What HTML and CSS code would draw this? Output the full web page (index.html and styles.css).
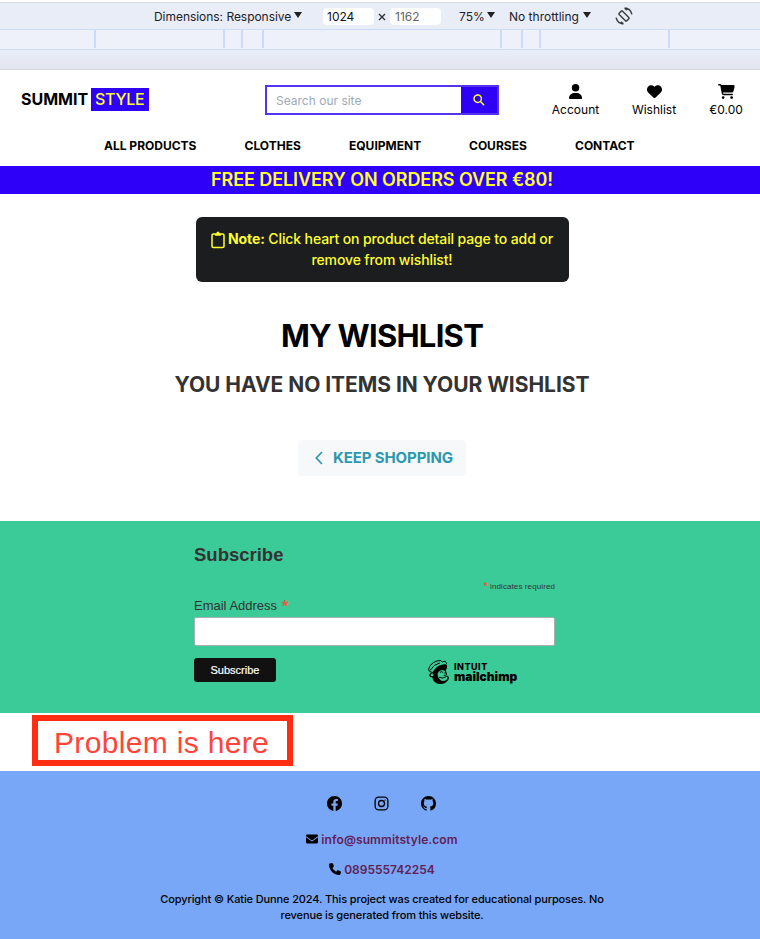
FILE: index.html
```html
<!DOCTYPE html>
<html lang="en">
<head>
<meta charset="utf-8">
<title>Summit Style - Wishlist</title>
<link rel="stylesheet" href="styles.css">
</head>
<body>
<div class="device">
  <div class="toolbar">
    <span class="t-dim">Dimensions: Responsive</span><i class="caret"></i>
    <span class="field field-w">1024</span>
    <svg class="times" viewBox="0 0 8 8"><path d="M1 1l6 6M7 1L1 7"/></svg>
    <span class="field field-h">1162</span>
    <span class="t-zoom">75%</span><i class="caret"></i>
    <span class="t-throttle">No throttling</span><i class="caret"></i>
    <svg class="rotate" viewBox="0 0 18 18"><rect x="6.6" y="3.6" width="4.8" height="10.8" rx="1" transform="rotate(-45 9 9)"/><path d="M9.6 1.1Q15.3 1.3 16.9 7.4M9.6 1.1l2.5 2.2M8.4 16.9Q2.7 16.7 1.1 10.6M8.4 16.9l-2.5-2.2"/></svg>
  </div>
  <div class="ruler"><i></i><i></i><i></i><i></i><i></i><i></i><i></i><i></i></div>
  <div class="gutter"></div>
</div>
<header>
  <div class="top">
    <a class="logo"><span class="logo-a">SUMMIT</span><span class="logo-b">STYLE</span></a>
    <div class="search"><span class="placeholder">Search our site</span><span class="search-btn"><svg viewBox="0 0 14 14"><circle cx="5.5" cy="5.5" r="4.3"/><path d="M8.7 8.7L13 13"/></svg></span></div>
    <div class="links">
      <a class="account"><svg viewBox="0 0 448 512"><path d="M224 256A128 128 0 1 0 224 0a128 128 0 1 0 0 256zm-45.700 48C79.800 304 0 383.800 0 482.300C0 498.700 13.300 512 29.700 512H418.300c16.400 0 29.700-13.300 29.700-29.700C448 383.800 368.200 304 269.700 304H178.300z"/></svg><span>Account</span></a>
      <a class="wish"><svg viewBox="0 0 512 512"><path d="M47.600 300.400L228.300 469.100c7.500 7 17.400 10.900 27.700 10.900s20.200-3.900 27.700-10.900L464.400 300.400c30.400-28.300 47.600-68 47.600-109.500v-5.800c0-69.900-50.500-129.500-119.400-141C347 36.500 300.600 51.400 268 84L256 96 244 84c-32.600-32.600-79-47.500-124.600-39.900C50.500 55.600 0 115.200 0 185.100v5.800c0 41.500 17.200 81.200 47.600 109.500z"/></svg><span>Wishlist</span></a>
      <a class="cart"><svg viewBox="0 0 576 512"><path d="M0 24C0 10.700 10.700 0 24 0H69.500c22 0 41.500 12.800 50.600 32h411c26.300 0 45.500 25 38.600 50.400l-41 152.300c-8.500 31.400-37 53.300-69.500 53.300H170.700l5.400 28.500c2.200 11.300 12.100 19.500 23.600 19.500H488c13.300 0 24 10.700 24 24s-10.700 24-24 24H199.700c-34.600 0-64.300-24.600-70.700-58.500L77.400 54.500c-.7-3.800-4-6.500-7.900-6.500H24C10.700 48 0 37.300 0 24zM128 464a48 48 0 1 1 96 0 48 48 0 1 1-96 0zm336-48a48 48 0 1 1 0 96 48 48 0 1 1 0-96z"/></svg><span>€0.00</span></a>
    </div>
  </div>
  <nav><a>ALL PRODUCTS</a><a>CLOTHES</a><a>EQUIPMENT</a><a>COURSES</a><a>CONTACT</a></nav>
</header>
<div class="banner"><span>FREE DELIVERY ON ORDERS OVER €80!</span></div>
<main>
  <div class="note"><svg viewBox="0 0 14 18"><path d="M4 3H2.300Q1 3 1 4.300V15.300Q1 16.600 2.300 16.600H11.700Q13 16.600 13 15.300V4.300Q13 3 11.700 3H10"/><path class="clip" d="M3.800 2.200H5.400Q5.700.6 7 .6T8.600 2.200H10.200V3.700Q10.200 4.700 9.200 4.700H4.800Q3.800 4.700 3.800 3.700z"/></svg><b>Note:</b> <span class="l1">Click heart on product detail page to add or</span><br><span class="l2">remove from wishlist!</span></div>
  <h1>MY WISHLIST</h1>
  <h2>YOU HAVE NO ITEMS IN YOUR WISHLIST</h2>
  <a class="keep"><svg viewBox="0 0 8 14"><path d="M7 1L1.300 7L7 13"/></svg><span>KEEP SHOPPING</span></a>
</main>
<section class="subscribe">
  <div class="form">
    <h3>Subscribe</h3>
    <p class="required"><em>*</em> indicates required</p>
    <label>Email Address <em>*</em></label>
    <div class="input"></div>
    <div class="actions">
      <button>Subscribe</button>
      <div class="mc">
        <svg viewBox="0 0 24 26"><path class="fill" d="M5 13Q6 11 8 9Q12 5 18 4.500Q21 4 20.300 8L19 11Q20.500 14 20.300 16Q23 17 22 20Q19 25.500 12 25Q6 24 5 18Q1.500 18 2 15Q2.500 13 5 13z"/><path class="line" d="M5 13Q.5 12 1.200 9.500Q3 3 10 1Q14-.5 15.500 2Q19 0 20 4M2.500 11Q7 4 13 3"/><path class="face" d="M12 12Q15 9 18 11.500L19 15Q22 17 20 20.500Q16 23 13 20.500Q10 17 10.500 14z"/><path class="line" d="M13 13q2-2 3 0M17.500 13v1M12 18Q16 20 20 17M17 16h2"/><circle class="face" cx="4.800" cy="15.500" r="1.500"/></svg>
        <div><span class="intuit">INTUIT</span><span class="chimp">mailchimp</span></div>
      </div>
    </div>
  </div>
</section>
<div class="gap"><div class="callout"><span>Problem is here</span></div></div>
<footer>
  <div class="social">
    <svg viewBox="0 0 16 16"><path d="M16 8.049c0-4.446-3.582-8.050-8-8.050C3.580 0 0 3.603 0 8.050c0 4.017 2.926 7.347 6.750 7.951v-5.625h-2.030V8.050H6.750V6.275c0-2.017 1.195-3.131 3.022-3.131.876 0 1.791.157 1.791.157v1.980h-1.009c-.993 0-1.303.621-1.303 1.258v1.510h2.218l-.354 2.326H9.250V16c3.824-.604 6.750-3.934 6.750-7.951z"/></svg>
    <svg class="insta" viewBox="0 0 16 16"><rect x="1.200" y="1.200" width="13.600" height="13.600" rx="3.800"/><circle cx="8" cy="8" r="3.200"/><path d="M11.700 4.300h.1"/></svg>
    <svg viewBox="0 0 16 16"><path d="M8 0C3.580 0 0 3.580 0 8c0 3.540 2.290 6.530 5.470 7.590.4.070.55-.17.55-.38 0-.19-.01-.82-.01-1.490-2.010.37-2.530-.49-2.690-.94-.09-.23-.48-.94-.82-1.130-.28-.15-.68-.52-.01-.53.63-.01 1.080.58 1.230.82.72 1.210 1.870.87 2.330.66.07-.52.28-.87.51-1.070-1.780-.2-3.640-.89-3.640-3.950 0-.87.31-1.590.82-2.150-.08-.2-.36-1.020.08-2.120 0 0 .67-.21 2.200.82.64-.18 1.320-.27 2-.27s1.360.09 2 .27c1.530-1.040 2.200-.82 2.200-.82.44 1.100.16 1.920.08 2.120.51.56.82 1.270.82 2.150 0 3.070-1.870 3.750-3.650 3.950.29.25.54.73.54 1.480 0 1.070-.01 1.930-.01 2.200 0 .21.15.46.55.38A8.013 8.013 0 0 0 16 8c0-4.420-3.580-8-8-8z"/></svg>
  </div>
  <div class="contact mail"><svg viewBox="0 0 512 512"><path d="M48 64C21.500 64 0 85.500 0 112c0 15.100 7.100 29.300 19.200 38.400L236.800 313.600c11.400 8.500 27 8.500 38.400 0L492.800 150.400c12.100-9.100 19.200-23.300 19.200-38.400c0-26.500-21.500-48-48-48H48zM0 176V384c0 35.300 28.700 64 64 64H448c35.300 0 64-28.700 64-64V176L294.400 339.200c-22.800 17.100-54 17.100-76.800 0L0 176z"/></svg><a>info@summitstyle.com</a></div>
  <div class="contact phone"><svg viewBox="0 0 512 512"><path d="M164.900 24.600c-7.700-18.600-28-28.500-47.400-23.200l-88 24C12.100 30.200 0 46 0 64C0 311.400 200.600 512 448 512c18 0 33.800-12.100 38.600-29.500l24-88c5.300-19.400-4.600-39.700-23.200-47.400l-96-40c-16.300-6.800-35.200-2.100-46.300 11.600L304.700 368C234.300 334.700 177.300 277.700 144 207.300L193.300 167c13.700-11.200 18.400-30 11.600-46.300l-40-96z"/></svg><a>089555742254</a></div>
  <p class="copy"><span>Copyright © Katie Dunne 2024. This project was created for educational purposes. No</span><br><span>revenue is generated from this website.</span></p>
</footer>
</body>
</html>
```
FILE: styles.css
```css
* { box-sizing: border-box; }
body { margin: 0; width: 760px; height: 939px; overflow: hidden; background: #fff; color: #000; font-family: Inter, "Liberation Sans", sans-serif; }
svg { display: block; flex: none; overflow: visible; }
span, a { white-space: nowrap; }
h1, h2, h3, p { margin: 0; }

.device { height: 70px; padding-top: 2px; background: #fff; }
.toolbar { height: 27px; border-top: 1px solid #dadce0; background: #e9edf8; display: flex; align-items: center; padding-left: 154px; font-size: 12px; color: #202124; }
.t-dim { width: 137px; letter-spacing: -.04px; }
.caret { width: 8px; height: 6px; margin: -2px 0 0 3px; background: #202124; clip-path: polygon(0 0, 100% 0, 50% 100%); }
.field { height: 17px; width: 51px; line-height: 17px; padding-left: 4px; border-radius: 4px; background: #fff; color: #111; }
.field-w { margin-left: 21px; }
.times { width: 8px; height: 8px; margin: 1px 4px 0 4px; fill: none; stroke: #303134; stroke-width: 1.4; }
.field-h { color: #666; padding-left: 5px; }
.t-zoom { width: 25px; margin-left: 18px; }
.t-throttle { width: 71px; margin-left: 14px; }
.rotate { width: 18px; height: 18px; margin-left: 24px; fill: none; stroke: #3c4043; stroke-width: 1.5; }
.ruler { height: 21px; background: #eef1fa; border-top: 1px solid #cbdbf9; border-bottom: 1px solid #cbdbf9; display: grid; grid-template-columns: 96px 129px 18px 21px 238px 21px 18px 129px; }
.ruler i { height: 18px; border-right: 2px solid #cbdbfb; }
.gutter { height: 20px; border-bottom: 1px solid #d5d7dc; background: linear-gradient(#e9edf8, #e2e5ee); }

header { height: 96px; }
.top { height: 60px; display: flex; }
.logo { display: flex; margin: 18px 0 0 21px; width: 128px; height: 23px; font-size: 16px; line-height: 23px; }
.logo-a { width: 70px; font-weight: 700; letter-spacing: 0; }
.logo-b { width: 58px; background: #2f00f8; color: #ffff2e; font-weight: 500; padding-left: 4px; letter-spacing: -.3px; }
.search { width: 234px; height: 30px; margin: 15px 0 0 116px; display: flex; border: 2px solid #5434ef; font-size: 12px; }
.placeholder { flex: 1; padding: 0 0 0 9px; line-height: 28px; color: #9da9b7; letter-spacing: 0; }
.search-btn { width: 36px; background: #2f00f8; display: grid; place-items: center; }
.search-btn svg { width: 12px; height: 12px; fill: none; stroke: #ffff2e; stroke-width: 1.700; }
.links { margin: 14px 0 0 52.500px; display: flex; font-size: 12px; }
.links a { display: flex; flex-direction: column; align-items: center; height: 40px; }
.links svg { height: 15px; }
.links span { line-height: 16px; margin-top: 3px; letter-spacing: 0; }
.account { width: 48px; }
.wish { width: 46px; margin-left: 31.500px; }
.cart { width: 34px; margin-left: 32px; }
nav { display: flex; padding-left: 104px; font-size: 12px; line-height: 16px; font-weight: 700; margin-top: 8px; }
nav a:nth-child(1) { width: 140.500px; }
nav a:nth-child(2) { width: 104.500px; }
nav a:nth-child(3) { width: 120px; }
nav a:nth-child(4) { width: 106px; }
.banner { height: 28px; padding-left: 4px; background: #2f00f8; color: #ffff2e; text-align: center; font-size: 18px; line-height: 28px; font-weight: 600; letter-spacing: -.08px; }

main { height: 327px; padding: 23px 0 0 4px; display: flex; flex-direction: column; align-items: center; }
.note { width: 373px; height: 65px; padding-top: 11px; border-radius: 6px; background: #1c1d1f; color: #ffff2e; text-align: center; font-size: 14px; line-height: 21px; font-weight: 450; letter-spacing: -.12px; }
.note svg { display: inline-block; width: 14px; height: 18px; margin-right: 3px; vertical-align: -5px; fill: none; stroke: #ffff2e; stroke-width: 1.500; }
.note .clip { fill: #ffff2e; stroke: none; }
h1 { margin-top: 34px; height: 40px; line-height: 40px; font-size: 31px; font-weight: 700; letter-spacing: -.75px; }
h2 { margin-top: 13px; height: 32px; line-height: 32px; font-size: 21px; font-weight: 700; letter-spacing: -.05px; color: #333; }
.keep { margin-top: 39px; width: 168px; height: 36px; border-radius: 4px; background: #f7f8fa; display: flex; align-items: center; color: #2b98b0; font-size: 15px; font-weight: 700; letter-spacing: -.1px; padding: 0 0 1px 17px; }
.keep svg { width: 8px; height: 14px; margin-right: 10px; fill: none; stroke: #2b98b0; stroke-width: 1.700; }

.subscribe { height: 192px; background: #3bcb98; font-family: "Liberation Sans", sans-serif; color: #333; padding: 23px 0 0 194px; }
.form { width: 361px; }
h3 { font-size: 18.500px; line-height: 22px; }
em { font-style: normal; color: #e85c41; }
.required { margin-top: 16px; font-size: 8px; line-height: 10px; text-align: right; letter-spacing: .1px; }
.required em { font-size: 10px; line-height: 8px; font-weight: 700; vertical-align: -1px; }
label { display: block; margin-top: 5px; font-size: 13px; line-height: 18px; }
label em { font-size: 17px; line-height: 10px; font-weight: 700; vertical-align: -2px; margin-left: 1px; }
.input { margin-top: 2px; height: 29px; background: #fff; border: 1px solid #abb0b2; border-radius: 2px; }
.actions { display: flex; margin-top: 12px; }
button { width: 82px; height: 24px; padding: 0; border: 0; border-radius: 3px; background: #111; color: #fff; font: 11px "Liberation Sans", sans-serif; -webkit-text-stroke: .2px #fff; }
.mc { display: flex; margin: 2px 0 0 151px; color: #000; }
.mc svg { width: 24px; height: 25px; margin-right: 3px; }
.mc .line { fill: none; stroke: #000; stroke-width: 1; }
.mc .face { fill: #3bcb98; }
.intuit, .chimp { display: block; font-family: Inter, sans-serif; }
.intuit { font-size: 9px; line-height: 11px; height: 11px; padding-top: 1px; font-weight: 800; letter-spacing: .5px; }
.chimp { font-size: 12px; line-height: 12px; height: 12px; font-weight: 900; letter-spacing: 0; }

.gap { height: 58px; padding: 2px 0 0 32px; }
.callout { width: 261px; height: 51px; border: 6px solid #ff2d12; padding-left: 16px; font: 30px/44px "Liberation Sans", sans-serif; letter-spacing: .33px; color: #ff453a; }
footer { height: 168px; background: #79a7f8; padding: 25px 0 0 4px; }
.social { display: flex; justify-content: center; gap: 32px; padding-right: 1px; }
.social svg { width: 15px; height: 15px; }
.social .insta { fill: none; stroke: #000; stroke-width: 1.400; stroke-linecap: round; }
.contact { display: flex; justify-content: center; align-items: center; height: 18px; font-size: 12px; font-weight: 600; color: #602156; }
.contact svg { width: 12px; height: 12px; margin-right: 3px; fill: #000; }
.mail { margin-top: 19px; letter-spacing: .1px; }
.phone { margin-top: 12px; }
.copy { margin-top: 13px; text-align: center; font-size: 11px; line-height: 16px; font-weight: 500; letter-spacing: -.12px; }
```
